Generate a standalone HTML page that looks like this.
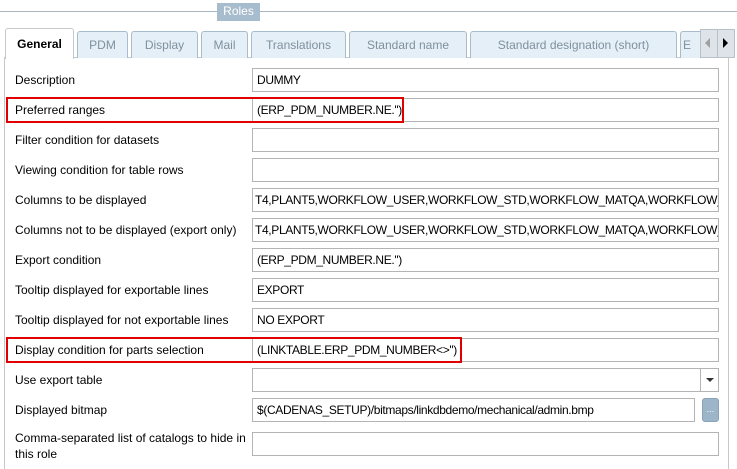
<!DOCTYPE html>
<html><head><style>
*{box-sizing:border-box;margin:0;padding:0}
html,body{width:737px;height:469px;overflow:hidden}
body{background:#fff;font-family:"Liberation Sans",sans-serif;font-size:12px;color:#000;position:relative}
.a{position:absolute}
.tab{position:absolute;top:31px;height:27px;background:#e5eff7;border:1px solid #a9bccb;border-bottom:none;border-radius:3px 3px 0 0;color:#7f909e;text-align:center;line-height:26px;white-space:nowrap;overflow:hidden}
.lbl{position:absolute;left:15px;white-space:nowrap}
.in{position:absolute;left:252px;width:467px;height:24px;border:1px solid #b4b4b4;background:#fff;padding-left:4px;line-height:23px;white-space:nowrap;overflow:hidden;letter-spacing:-0.35px}
.red{position:absolute;border:2px solid #e00000}
</style></head><body>
<div class="a" style="left:0;top:11px;width:737px;height:1px;background:#a9b7c3"></div>
<div class="a" style="left:217px;top:3px;width:43px;height:18px;background:#a7bccc;color:#fff;text-align:center;line-height:17px">Roles</div>

<div class="a" style="left:4px;top:57px;width:725px;height:412px;border:1px solid #c8c8c8;border-bottom:none;background:#fff"></div>
<div class="a" style="left:5px;top:28px;width:69px;height:31px;background:#fff;border:1px solid #c8c8c8;border-bottom:none;border-radius:3px 3px 0 0;font-weight:bold;text-align:center;line-height:30px">General</div>
<div class="tab" style="left:77px;width:51px">PDM</div>
<div class="tab" style="left:131px;width:67px">Display</div>
<div class="tab" style="left:201px;width:47px">Mail</div>
<div class="tab" style="left:251px;width:95px">Translations</div>
<div class="tab" style="left:349px;width:118px">Standard name</div>
<div class="tab" style="left:470px;width:207px">Standard designation (short)</div>
<div class="tab" style="left:680px;width:30px;text-align:left;padding-left:2px">E</div>
<div class="a" style="left:700px;top:29px;width:18px;height:29px;background:#dde3e8;border:1px solid #b8c0c8"></div>
<div class="a" style="left:717px;top:29px;width:18px;height:29px;background:#dde3e8;border:1px solid #b8c0c8"></div>
<div class="a" style="left:705px;top:38px;width:0;height:0;border-top:5px solid transparent;border-bottom:5px solid transparent;border-right:5px solid #a0a0a0"></div>
<div class="a" style="left:723px;top:38px;width:0;height:0;border-top:5px solid transparent;border-bottom:5px solid transparent;border-left:5px solid #000"></div>

<div class="lbl" style="top:73px">Description</div><div class="in" style="top:68px">DUMMY</div>
<div class="lbl" style="top:103px">Preferred ranges</div><div class="in" style="top:98px">(ERP_PDM_NUMBER.NE.'')</div>
<div class="lbl" style="top:133px">Filter condition for datasets</div><div class="in" style="top:128px"></div>
<div class="lbl" style="top:163px">Viewing condition for table rows</div><div class="in" style="top:158px"></div>
<div class="lbl" style="top:193px">Columns to be displayed</div><div class="in" style="top:188px;padding-left:2px">T4,PLANT5,WORKFLOW_USER,WORKFLOW_STD,WORKFLOW_MATQA,WORKFLOW_PD</div>
<div class="lbl" style="top:223px">Columns not to be displayed (export only)</div><div class="in" style="top:218px;padding-left:2px">T4,PLANT5,WORKFLOW_USER,WORKFLOW_STD,WORKFLOW_MATQA,WORKFLOW_PD</div>
<div class="lbl" style="top:253px">Export condition</div><div class="in" style="top:248px">(ERP_PDM_NUMBER.NE.'')</div>
<div class="lbl" style="top:283px">Tooltip displayed for exportable lines</div><div class="in" style="top:278px">EXPORT</div>
<div class="lbl" style="top:313px">Tooltip displayed for not exportable lines</div><div class="in" style="top:308px">NO EXPORT</div>
<div class="lbl" style="top:343px">Display condition for parts selection</div><div class="in" style="top:338px">(LINKTABLE.ERP_PDM_NUMBER&lt;&gt;'')</div>
<div class="lbl" style="top:373px">Use export table</div><div class="in" style="top:368px"></div>
<div class="a" style="left:700px;top:369px;width:1px;height:22px;background:#b4b4b4"></div>
<div class="a" style="left:706px;top:378px;width:0;height:0;border-left:4px solid transparent;border-right:4px solid transparent;border-top:4px solid #333"></div>
<div class="lbl" style="top:403px">Displayed bitmap</div><div class="in" style="top:398px;width:443px">$(CADENAS_SETUP)/bitmaps/linkdbdemo/mechanical/admin.bmp</div>
<div class="a" style="left:702px;top:398px;width:17px;height:24px;background:#9db5c9;border:1px solid #8aa3b8;border-radius:3px;color:#fff;font-size:9px;text-align:center;line-height:20px">...</div>
<div class="lbl" style="top:430px;line-height:16px">Comma-separated list of catalogs to hide in<br>this role</div><div class="in" style="top:432px"></div>

<div class="red" style="left:6px;top:97px;width:398px;height:26px"></div>
<div class="red" style="left:6px;top:337px;width:456px;height:26px"></div>
</body></html>
